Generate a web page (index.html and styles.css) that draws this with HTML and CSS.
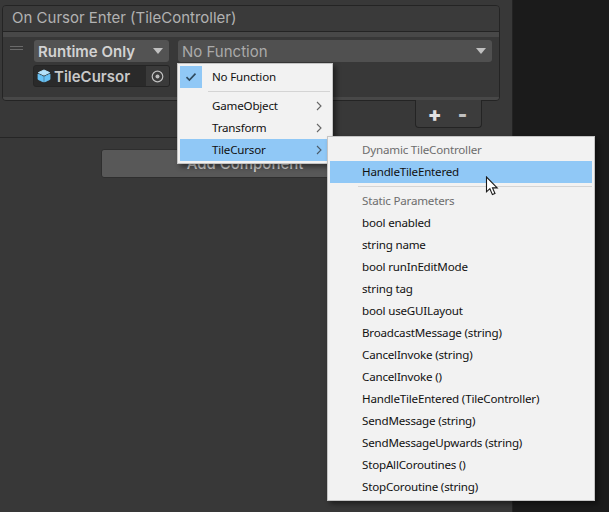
FILE: index.html
```html
<!DOCTYPE html>
<html lang="en">
<head>
<meta charset="utf-8">
<title>On Cursor Enter</title>
<link rel="stylesheet" href="styles.css">
</head>
<body>
<div class="app">
  <main class="inspector">
    <section class="event">
      <header class="event-head">On Cursor Enter (TileController)</header>
      <div class="event-strip"></div>
      <div class="event-body">
        <div class="handle"></div>
        <div class="fields">
          <div class="row">
            <div class="drop mode"><span>Runtime Only</span><i class="arrow"></i></div>
            <div class="drop func"><span>No Function</span><i class="arrow"></i></div>
          </div>
          <div class="objfield">
            <svg class="cube" width="14" height="14" viewBox="0 0 14 14"><path d="M7 1 12.6 3.6 7 6.2 1.4 3.6Z" fill="#b4e2fb" stroke="#b4e2fb" stroke-linejoin="round"/><path d="M1 5 6.4 7.5V13L1 10.4Z" fill="#68c2f5" stroke="#68c2f5" stroke-linejoin="round" stroke-width=".8"/><path d="M13 5 7.6 7.5V13L13 10.4Z" fill="#68c2f5" stroke="#68c2f5" stroke-linejoin="round" stroke-width=".8"/></svg>
            <span class="objname">TileCursor</span>
            <span class="picker"><svg width="13" height="13" viewBox="0 0 13 13"><circle cx="6.5" cy="6.5" r="5.3" fill="none" stroke="#bdbdbd" stroke-width="1.2"/><circle cx="6.5" cy="6.5" r="2" fill="#bdbdbd"/></svg></span>
          </div>
        </div>
      </div>
      <div class="event-foot"></div>
    </section>
    <div class="plusminus"><div class="pm-box"><b>+</b><b class="minus">-</b></div></div>
    <hr class="rule">
    <div class="addrow"><button class="addbtn">Add Component</button></div>
  </main>
  <aside class="outside"></aside>

  <div class="menu menu-one">
    <div class="item"><span class="gut"><span class="check"><svg width="12" height="10" viewBox="0 0 12 10"><path d="M1.5 5.2 4.4 8 10.5 1.6" fill="none" stroke="#2f4a5f" stroke-width="1.6"/></svg></span></span>No Function</div>
    <div class="sep"></div>
    <div class="item"><span class="gut"></span>GameObject<svg class="chev" width="6" height="10" viewBox="0 0 6 10"><path d="M1 1 5 5 1 9" fill="none" stroke="#666" stroke-width="1.1"/></svg></div>
    <div class="item"><span class="gut"></span>Transform<svg class="chev" width="6" height="10" viewBox="0 0 6 10"><path d="M1 1 5 5 1 9" fill="none" stroke="#666" stroke-width="1.1"/></svg></div>
    <div class="item on"><span class="gut"></span>TileCursor<svg class="chev" width="6" height="10" viewBox="0 0 6 10"><path d="M1 1 5 5 1 9" fill="none" stroke="#4a5a68" stroke-width="1.1"/></svg></div>
  </div>

  <div class="menu menu-two">
    <div class="item dim"><span class="gut"></span>Dynamic TileController</div>
    <div class="item on"><span class="gut"></span>HandleTileEntered</div>
    <div class="sep"></div>
    <div class="item dim"><span class="gut"></span>Static Parameters</div>
    <div class="item"><span class="gut"></span>bool enabled</div>
    <div class="item"><span class="gut"></span>string name</div>
    <div class="item"><span class="gut"></span>bool runInEditMode</div>
    <div class="item"><span class="gut"></span>string tag</div>
    <div class="item"><span class="gut"></span>bool useGUILayout</div>
    <div class="item"><span class="gut"></span>BroadcastMessage (string)</div>
    <div class="item"><span class="gut"></span>CancelInvoke (string)</div>
    <div class="item"><span class="gut"></span>CancelInvoke ()</div>
    <div class="item"><span class="gut"></span>HandleTileEntered (TileController)</div>
    <div class="item"><span class="gut"></span>SendMessage (string)</div>
    <div class="item"><span class="gut"></span>SendMessageUpwards (string)</div>
    <div class="item"><span class="gut"></span>StopAllCoroutines ()</div>
    <div class="item"><span class="gut"></span>StopCoroutine (string)</div>
  </div>

  <svg class="cursor" width="14" height="21" viewBox="0 0 14 21"><path d="M1.5 1V15.8L4.9 12.7 7.4 18.6 10 17.4 7.5 11.9H12.2Z" fill="#fff" stroke="#1a1a1a" stroke-width="1.1"/></svg>
</div>
</body>
</html>
```
FILE: styles.css
```css
* { box-sizing: border-box; }
html, body { margin: 0; height: 100%; }
body { background: #1b1b1b; overflow: hidden; }
.app { position: relative; display: flex; width: 609px; height: 512px; }
.inspector {
  width: 513px; height: 512px; flex: none;
  background: #383838; border-right: 1px solid #232323;
  padding: 5px 0 0 0;
  font-family: Inter, "Liberation Sans", sans-serif;
}
.outside { flex: 1; background: #1b1b1b; }

.event {
  margin: 0 12px 0 2px; height: 96px;
  border: 1px solid #242424; border-radius: 4px;
  background: #383838; display: flex; flex-direction: column; overflow: hidden;
}
.event-head {
  height: 26px; flex: none; padding: 0 0 1px 9px;
  background: #3a3a3a; border-bottom: 1px solid #242424;
  color: #b2b2b2; font-size: 15px; line-height: 24px;
}
.event-strip { height: 5px; flex: none; background: #484848; }
.event-body { flex: 1; display: flex; padding: 3px 7px 0 7px; }
.event-foot { height: 3px; flex: none; background: #484848; }
.handle {
  width: 13px; height: 4px; margin: 6px 11px 0 0; flex: none;
  border-top: 1px solid #6a6a6a; border-bottom: 1px solid #6a6a6a;
}
.fields { flex: 1; display: flex; flex-direction: column; gap: 3px; }
.row { display: flex; gap: 9px; }
.drop {
  height: 22px; display: flex; align-items: center; justify-content: space-between;
  padding: 0 6px 0 4px; border-radius: 3px; background: #535353; color: #aaa; font-size: 15px;
}
.mode { width: 135px; color: #d2d2d2; font-weight: 600; }
.func { flex: 1; background: #505050; }
.arrow { width: 0; height: 0; border-left: 5.5px solid transparent; border-right: 5.5px solid transparent; border-top: 6px solid #c0c0c0; }
.objfield {
  width: 137px; height: 22px; margin-left: -1px; display: flex; align-items: center;
  background: #2a2a2a; border: 1px solid #252525; border-radius: 3px; padding-left: 3px;
  color: #c8c8c8; font-size: 15px; font-weight: 600; overflow: hidden;
}
.cube { flex: none; }
.objname { margin-left: 3px; flex: 1; }
.picker { width: 23px; height: 20px; background: #3a3a3a; display: flex; align-items: center; justify-content: center; }

.plusminus { margin-top: -1px; display: flex; justify-content: flex-end; padding-right: 30px; }
.pm-box {
  width: 67px; height: 28px; display: flex; align-items: center; justify-content: center; gap: 16px;
  background: #3c3c3c; border: 1px solid #242424; border-top: 0; border-radius: 0 0 4px 4px;
  color: #e2e2e2; font-size: 20px; font-weight: 700; padding-right: 2px;
}
.minus { color: #c0c0c0; }
.rule { margin: 9px 0 0; border: 0; border-top: 1px solid #252525; }
.addrow { padding: 11px 0 0 101px; }
.addbtn {
  width: 288px; height: 29px; border: 1px solid #2e2e2e; border-radius: 3px; background: #585858;
  color: #cfcfcf; font: 500 15px Inter, "Liberation Sans", sans-serif; padding: 0;
}

.menu {
  position: absolute; background: #f2f2f2; border: 1px solid #c4c4c4; padding: 2px;
  box-shadow: 3px 3px 5px rgba(0,0,0,.45);
  font-family: "Noto Sans", sans-serif; font-size: 11.6px; letter-spacing: -.2px; color: #111;
}
.menu-one { left: 177px; top: 63px; width: 156px; height: 101px; }
.menu-two { left: 327px; top: 136px; width: 268px; height: 365px; }
.item { height: 22px; display: flex; align-items: center; position: relative; white-space: nowrap; padding-bottom: 2px; }
.item.on { background: #90c8f6; }
.item.dim { color: #6d6d6d; }
.gut { width: 32px; flex: none; }
.check { position: absolute; left: 0; top: 0; display: flex; width: 22px; height: 22px; background: #90c8f6; align-items: center; justify-content: center; }
.sep { height: 1px; margin: 3px 0 3px 28px; background: #d4d4d4; }
.chev { position: absolute; right: 8px; top: 6px; }
.cursor { position: absolute; left: 485px; top: 176px; }
```
